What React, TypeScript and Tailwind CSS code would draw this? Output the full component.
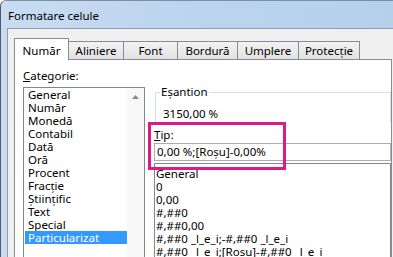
const categories = [
  "General",
  "Număr",
  "Monedă",
  "Contabil",
  "Dată",
  "Oră",
  "Procent",
  "Fracție",
  "Științific",
  "Text",
  "Special",
  "Particularizat",
];

const types = [
  "General",
  "0",
  "0,00",
  "#,##0",
  "#,##0,00",
  "#,##0 _l_e_i;-#,##0 _l_e_i",
  "#,##0 _l_e_i;[Roșu]-#,##0 _l_e_i",
];

const tabs = [
  { label: "Aliniere", w: "w-[55px]" },
  { label: "Font", w: "w-[54px]" },
  { label: "Bordură", w: "w-[60px]" },
  { label: "Umplere", w: "w-[61px]" },
  { label: "Protecție", w: "w-[61px]" },
];

export default function App() {
  return (
    <div
      className="relative w-[393px] h-[257px] overflow-hidden flex flex-col rounded-tl-[6px] border-l border-t border-l-[#4d5a6b] border-t-[#7d8fa6] bg-gradient-to-r from-[#c9dcf1] via-[#bcd4ee] to-[#b6d0ec] text-[11.5px] text-black"
      style={{ fontFamily: '"Noto Sans", "DejaVu Sans", sans-serif' }}
    >
      {/* title bar */}
      <div className="h-[27px] shrink-0 flex items-center pl-[7px] pt-[2px] text-[11.5px]">
        Formatare celule
      </div>

      {/* dialog body */}
      <div className="flex-1 ml-[6px] border-l border-t border-[#8a9db5] bg-[#f0f0f0] pl-[6px] pt-[9px]">
        {/* tabs */}
        <div className="flex items-end h-[21px]">
          <div className="relative z-10 w-[55px] h-[22px] -mb-px flex justify-center pt-[3px] bg-white border-l border-t border-r border-[#898c95]">
            Număr
          </div>
          {tabs.map((t) => (
            <div
              key={t.label}
              className={`${t.w} h-[18px] flex items-center justify-center border-t border-r border-[#898c95] bg-gradient-to-b from-[#f3f3f3] to-[#e2e2e2]`}
            >
              {t.label}
            </div>
          ))}
        </div>

        {/* tab panel */}
        <div className="relative w-[378px] h-[200px] bg-white border-l border-t border-r border-[#898c95] flex pl-[8px]">
          {/* left column */}
          <div className="w-[122px] pt-[8px] flex flex-col">
            <div className="h-[15px] leading-[15px]">
              <span className="underline">C</span>ategorie:
            </div>
            <div className="mt-[4px] flex-1 border border-[#828790] flex">
              <div className="w-[103px] flex flex-col">
                {categories.map((c) => (
                  <div
                    key={c}
                    className={`h-[13px] leading-[13px] ml-px pl-[3px] whitespace-nowrap ${
                      c === "Particularizat" ? "bg-[#3399ff] text-white" : ""
                    }`}
                  >
                    {c}
                  </div>
                ))}
              </div>
              <div className="w-[17px] bg-[#f8f8f8]">
                <div className="h-[17px] flex items-center justify-center">
                  <svg width="7" height="4" viewBox="0 0 7 4">
                    <path d="M0 4 L3.5 0 L7 4 Z" fill="#8a8a8a" />
                  </svg>
                </div>
              </div>
            </div>
          </div>

          {/* right column */}
          <div className="w-[237px] ml-[9px] pt-[32px] flex flex-col">
            <div className="relative ml-px h-[31px] border-l border-t border-r border-[#d5dfe5]">
              <span className="absolute -top-[9px] left-[4px] bg-white px-px leading-[15px]">
                Eșantion
              </span>
              <div className="pl-[7px] pt-[13px] leading-[15px]">3150,00 %</div>
            </div>
            <div className="mt-[4px] h-[15px] leading-[15px]">
              <span className="underline">T</span>ip:
            </div>
            <div className="mt-px h-[18px] border border-[#abadb3] flex items-center pl-[2px]">
              0,00 %;[Roșu]-0,00%
            </div>
            <div className="mt-[2px] flex-1 border border-[#828790] pt-[3px] pl-[1px]">
              {types.map((t) => (
                <div key={t} className="h-[13px] leading-[13px] whitespace-nowrap">
                  {t}
                </div>
              ))}
            </div>
          </div>
        </div>
      </div>

      {/* callout */}
      <div className="absolute left-[147px] top-[121px] w-[138px] h-[48px] border-[3px] border-[#dd1a8a]" />
    </div>
  );
}
